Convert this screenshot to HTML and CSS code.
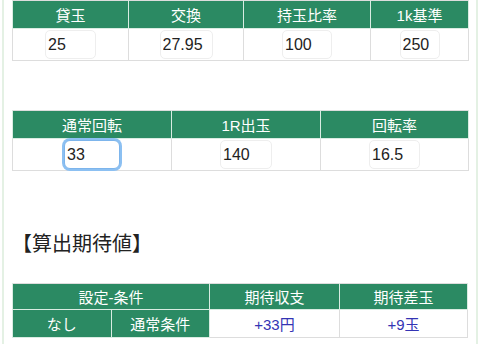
FILE: index.html
```html
<!DOCTYPE html>
<html lang="ja">
<head>
    <meta charset="UTF-8">
    <meta name="viewport" content="width=device-width, initial-scale=1.0">
    <title>期待値計算</title>
    <link rel="stylesheet" href="styles.css">
</head>
<body>

    <div class="wrap">
        <table class="calc t1">
            <tr>
                <th class="c-kashi">貸玉</th>
                <th class="c-koukan">交換</th>
                <th class="c-mochi">持玉比率</th>
                <th class="c-kijun">1k基準</th>
            </tr>
            <tr>
                <td><input type="text" class="num w51" value="25"></td>
                <td><input type="text" class="num w53" value="27.95"></td>
                <td><input type="text" class="num w50" value="100"></td>
                <td><input type="text" class="num w40" value="250"></td>
            </tr>
        </table>

        <table class="calc t2">
            <tr>
                <th class="c-tsujo">通常回転</th>
                <th class="c-1r">1R出玉</th>
                <th class="c-kaiten">回転率</th>
            </tr>
            <tr>
                <td><input type="text" class="num w56 focus" value="33"></td>
                <td><input type="text" class="num w52" value="140"></td>
                <td><input type="text" class="num w51" value="16.5"></td>
            </tr>
        </table>

        <h2 class="title">【算出期待値】</h2>

        <table class="calc t3">
            <tr>
                <th colspan="2">設定-条件</th>
                <th class="c-shushi">期待収支</th>
                <th class="c-sadama">期待差玉</th>
            </tr>
            <tr>
                <th class="c-settei">なし</th>
                <th class="c-joken">通常条件</th>
                <td class="val">+33円</td>
                <td class="val">+9玉</td>
            </tr>
        </table>
    </div>

</body>
</html>
```

FILE: styles.css
```css
* {
    margin: 0;
    padding: 0;
    box-sizing: border-box;
}

body {
    font-family: "Liberation Sans", "Noto Sans CJK JP", sans-serif;
    background: #fff;
    color: #222;
}

/* contenedor con bordes verdes */
.wrap {
    margin: 0 2px;
    border-left: 2px solid #e4f1e4;
    border-right: 2px solid #e4f1e4;
    padding: 0 8px;
    height: 344px;
}

/* tablas */
.calc {
    width: 456px;
    border-collapse: collapse;
    table-layout: fixed;
    border: 1px solid #ddd;
}

.calc th {
    background: #2b8a63;
    color: #fff;
    font-weight: normal;
    font-size: 15px;
    height: 28px;
    border: 1px solid #d9ece2;
    border-top: none;
    text-align: center;
}

.calc td {
    height: 32px;
    border: 1px solid #ddd;
    text-align: center;
    padding: 1px 0;
}

.t1 { margin-top: 0; }
.t2 { margin-top: 49px; }

.c-kashi { width: 116px; }
.c-koukan { width: 115px; }
.c-mochi { width: 127px; }
.c-kijun { width: 98px; }

.c-tsujo { width: 159px; }
.c-1r { width: 149px; }
.c-kaiten { width: 148px; }

.c-settei { width: 70px; }
.c-joken { width: 128px; }
.c-shushi { width: 130px; }
.c-sadama { width: 128px; }

/* campos */
.num {
    display: inline-block;
    vertical-align: middle;
    height: 29px;
    border: 1px solid #eee;
    border-radius: 5px;
    padding: 0 2px;
    font-family: "Liberation Sans", sans-serif;
    font-size: 16px;
    color: #222;
    background: #fff;
    outline: none;
}

.num.focus {
    border: 1px solid #7db5ec;
    box-shadow: 0 0 0 2px #8cc0f2;
    border-radius: 6px;
}

.w40 { width: 40px; }
.w50 { width: 50px; }
.w51 { width: 51px; }
.w52 { width: 52px; }
.w53 { width: 53px; }
.w56 { width: 56px; }

/* titulo */
.title {
    font-size: 20px;
    font-weight: normal;
    line-height: 28px;
    margin: 59px 0 25px;
    color: #222;
}

.t3 th {
    height: 26px;
}

.t3 td {
    height: 28px;
}

.t3 .val {
    color: #3434b4;
    font-size: 15px;
}
```
